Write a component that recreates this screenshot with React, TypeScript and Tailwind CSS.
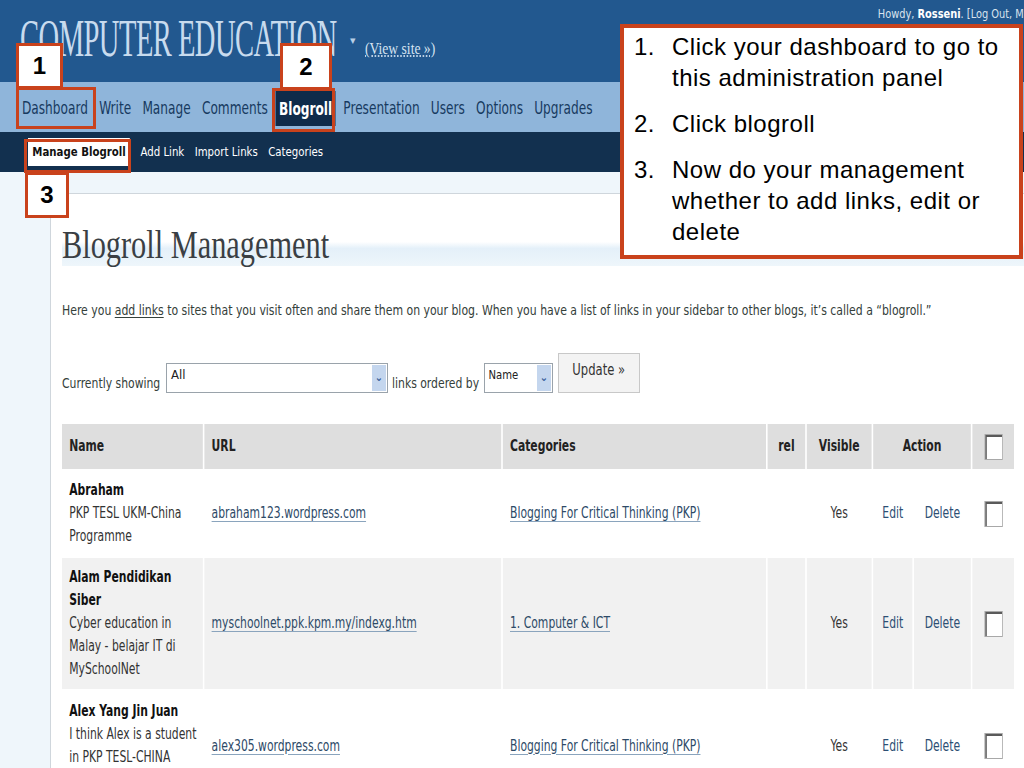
import React from 'react';

const sans = "font-['DejaVu_Sans_Condensed','DejaVu_Sans',sans-serif]";

function Marker({ n, className }: { n?: string; className: string }) {
  return (
    <div
      className={`absolute border-[3px] border-[#c9421c] flex items-center justify-center font-['Liberation_Sans',sans-serif] font-bold text-[24px] text-black ${className}`}
    >
      {n}
    </div>
  );
}

function Check() {
  return (
    <span className="inline-block align-middle w-[23px] h-[26px] border border-[#a8a8a8] bg-white shadow-[inset_2px_2px_0_#5a5a5a,inset_3px_3px_0_#fff]" />
  );
}

const navItems = ['Dashboard', 'Write', 'Manage', 'Comments', 'Blogroll', 'Presentation', 'Users', 'Options', 'Upgrades'];
const subItems = ['Manage Blogroll', 'Add Link', 'Import Links', 'Categories'];

const rows = [
  {
    name: ['Abraham'],
    desc: ['PKP TESL UKM-China', 'Programme'],
    url: 'abraham123.wordpress.com',
    cat: 'Blogging For Critical Thinking (PKP)',
    h: 'h-[89px]',
    bg: 'bg-white',
  },
  {
    name: ['Alam Pendidikan', 'Siber'],
    desc: ['Cyber education in', 'Malay - belajar IT di', 'MySchoolNet'],
    url: 'myschoolnet.ppk.kpm.my/indexg.htm',
    cat: '1. Computer & ICT',
    h: 'h-[131px]',
    bg: 'bg-[#f1f1f1]',
  },
  {
    name: ['Alex Yang Jin Juan'],
    desc: ['I think Alex is a student', 'in PKP TESL-CHINA', 'Programme'],
    url: 'alex305.wordpress.com',
    cat: 'Blogging For Critical Thinking (PKP)',
    h: 'h-[114px]',
    bg: 'bg-white',
  },
];

export default function App() {
  return (
    <div className="relative w-[1024px] h-[768px] overflow-hidden bg-[#eff6fb]">
      {/* header */}
      <div className="h-[82px] bg-[#22588f] flex items-start relative">
        <div className="w-[330px] pl-[20px] pt-[10px] whitespace-nowrap">
          <span className="inline-block origin-left scale-x-[0.55] font-['Liberation_Serif',serif] text-[52px] leading-[58px] text-[#c8dbee] tracking-[-1px]">
            COMPUTER EDUCATION
          </span>
        </div>
        <span className="mt-[32px] ml-[20px] text-[11px] text-[#b9cfe6]">▾</span>
        <span className="mt-[36px] ml-[9px] inline-block origin-left scale-x-[0.8] font-['Liberation_Serif',serif] text-[17px] text-[#d6e4f2] underline decoration-dotted underline-offset-2">
          (View site »)
        </span>
        <div className={`absolute right-0 top-[4px] whitespace-nowrap text-[13px] text-[#d9e3ee] origin-right scale-x-[0.84] ${sans}`}>
          Howdy, <b className="text-white">Rosseni</b>. [Log Out, M
        </div>
      </div>

      {/* main nav */}
      <div className="h-[50px] bg-[#8fb5da] flex items-center pl-[22px]">
        <div className={`flex items-center gap-[15px] whitespace-nowrap origin-left scale-x-[0.75] ${sans}`}>
          {navItems.map((item) => (
            <span
              key={item}
              className={
                item === 'Blogroll'
                  ? 'px-[5px] -mx-[5px] h-[35px] mt-[3px] flex items-end pb-[4px] bg-[#0f2b4a] text-white font-bold text-[18px]'
                  : 'text-[18px] text-[#173a60]'
              }
            >
              {item}
            </span>
          ))}
        </div>
      </div>

      {/* sub nav */}
      <div className="h-[40px] bg-[#12304f] flex items-center pl-[28px]">
        <div className={`flex items-center gap-[12px] whitespace-nowrap origin-left scale-x-[0.87] ${sans}`}>
          {subItems.map((item) => (
            <span
              key={item}
              className={
                item === 'Manage Blogroll'
                  ? 'px-[5px] h-[28px] flex items-center bg-white text-[#111] font-bold text-[13px]'
                  : 'text-[13px] text-white'
              }
            >
              {item}
            </span>
          ))}
        </div>
      </div>

      <div className="h-[21px]" />

      {/* content */}
      <div className="ml-[50px] h-[600px] bg-white border-l border-t border-[#cfd6dc] pl-[11px]">
        <div className="mt-[28px] h-[44px] bg-[linear-gradient(to_bottom,#ffffff_45%,#e4f0f9_60%,#eef6fb_100%)] whitespace-nowrap">
          <span className="inline-block origin-left scale-x-[0.74] font-['Liberation_Serif',serif] text-[41px] leading-[44px] text-[#3a3f44]">
            Blogroll Management
          </span>
        </div>

        <p className={`mt-[34px] text-[14px] text-[#34403a] whitespace-nowrap origin-left scale-x-[0.865] ${sans}`}>
          Here you <span className="underline underline-offset-2">add links</span> to sites that you visit often and share them on your blog. When you have a list of links in your sidebar to other blogs, it’s called a “blogroll.”
        </p>

        <div className={`mt-[32px] flex items-end text-[14px] text-[#34403a] ${sans}`}>
          <span className="w-[104px] leading-[20px] whitespace-nowrap">
            <span className="inline-block origin-left scale-x-[0.86]">Currently showing</span>
          </span>
          <div className="w-[222px] h-[30px] border border-[#9aa3ab] bg-white flex justify-between">
            <span className="pl-[4px] pt-[4px] text-[13px] text-[#222] leading-[14px]">All</span>
            <span className="w-[14px] m-[1px] bg-[#c4d6ee] text-[#3a5f9a] text-[11px] font-bold flex items-center justify-center">⌄</span>
          </div>
          <span className="w-[96px] pl-[4px] leading-[20px] whitespace-nowrap">
            <span className="inline-block origin-left scale-x-[0.86]">links ordered by</span>
          </span>
          <div className="w-[69px] h-[30px] border border-[#9aa3ab] bg-white flex justify-between">
            <span className="pl-[4px] pt-[4px] text-[13px] text-[#222] leading-[14px] inline-block origin-left scale-x-[0.86]">Name</span>
            <span className="w-[14px] m-[1px] bg-[#c4d6ee] text-[#3a5f9a] text-[11px] font-bold flex items-center justify-center">⌄</span>
          </div>
          <div className="ml-[5px] w-[82px] h-[40px] border border-[#c8c8c8] bg-[#f3f3f3] flex justify-center pt-[8px] text-[15px] text-[#333] leading-[16px]">
            <span className="inline-block scale-x-[0.86]">Update »</span>
          </div>
        </div>

        <div className="mt-[31px] w-[952px]">
          <table className={`w-[1190px] table-fixed border-collapse text-[15px] leading-[23px] origin-left scale-x-[0.8] ${sans}`}>
            <colgroup>
              <col className="w-[177px]" />
              <col className="w-[373px]" />
              <col className="w-[331px]" />
              <col className="w-[49px]" />
              <col className="w-[83px]" />
              <col className="w-[51px]" />
              <col className="w-[73px]" />
              <col className="w-[53px]" />
            </colgroup>
            <thead>
              <tr className="h-[45px] bg-[#dedede] text-[#222] font-bold">
                <th className="text-left pl-[9px] border-r-2 border-white">Name</th>
                <th className="text-left pl-[9px] border-r-2 border-white">URL</th>
                <th className="text-left pl-[9px] border-r-2 border-white">Categories</th>
                <th className="text-center border-r-2 border-white">rel</th>
                <th className="text-center border-r-2 border-white">Visible</th>
                <th colSpan={2} className="text-center border-r-2 border-white">Action</th>
                <th className="text-center align-middle"><Check /></th>
              </tr>
            </thead>
            <tbody>
              {rows.map((r) => (
                <tr key={r.url} className={`${r.h} ${r.bg} text-[#333]`}>
                  <td className="pl-[9px] align-middle border-r-2 border-white whitespace-nowrap">
                    {r.name.map((n) => (
                      <div key={n} className="font-bold text-[#111]">{n}</div>
                    ))}
                    {r.desc.map((d) => (
                      <div key={d}>{d}</div>
                    ))}
                  </td>
                  <td className="pl-[9px] align-middle border-r-2 border-white whitespace-nowrap">
                    <span className="text-[#2d4a67] underline decoration-[#8aa4bd] underline-offset-3">{r.url}</span>
                  </td>
                  <td className="pl-[9px] align-middle border-r-2 border-white whitespace-nowrap">
                    <span className="text-[#2d4a67] underline decoration-[#8aa4bd] underline-offset-3">{r.cat}</span>
                  </td>
                  <td className="border-r-2 border-white" />
                  <td className="text-center border-r-2 border-white">Yes</td>
                  <td className="text-center text-[#2d4f74] border-r-2 border-white">Edit</td>
                  <td className="text-center text-[#2d4f74] border-r-2 border-white">Delete</td>
                  <td className="text-center align-middle"><Check /></td>
                </tr>
              ))}
            </tbody>
          </table>
        </div>
      </div>

      {/* annotations */}
      <Marker n="1" className="left-[16px] top-[43px] w-[47px] h-[46px] bg-white" />
      <Marker className="left-[16px] top-[87px] w-[80px] h-[42px]" />
      <Marker n="2" className="left-[280px] top-[43px] w-[52px] h-[47px] bg-white" />
      <Marker className="left-[272px] top-[88px] w-[63px] h-[44px]" />
      <Marker className="left-[24px] top-[139px] w-[107px] h-[34px]" />
      <Marker n="3" className="left-[25px] top-[172px] w-[44px] h-[46px] bg-white" />

      <div className="absolute left-[620px] top-[24px] w-[403px] h-[235px] border-[4px] border-[#c9421c] bg-white pt-[3px] font-['Liberation_Sans',sans-serif] text-[24px] leading-[31px] tracking-[0.5px] text-black">
        <ol className="flex flex-col gap-[15px]">
          <li className="flex"><span className="w-[48px] pl-[10px] shrink-0">1.</span><span>Click your dashboard to go to this administration panel</span></li>
          <li className="flex"><span className="w-[48px] pl-[10px] shrink-0">2.</span><span>Click blogroll</span></li>
          <li className="flex"><span className="w-[48px] pl-[10px] shrink-0">3.</span><span>Now do your management whether to add links, edit or delete</span></li>
        </ol>
      </div>
    </div>
  );
}
